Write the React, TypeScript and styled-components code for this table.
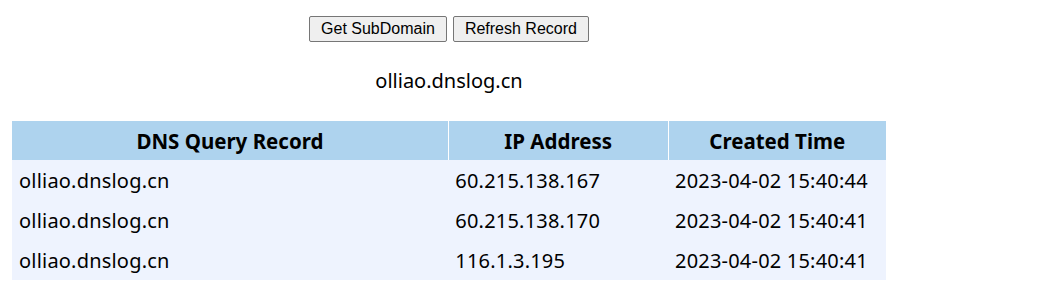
import React from "react";
import styled, { createGlobalStyle } from "styled-components";

const Global = createGlobalStyle`
  html, body { margin: 0; padding: 0; background: #fff; }
  body { font-family: "Noto Sans", "Open Sans", sans-serif; color: #000; }
`;

const Page = styled.div`
  width: 874px;
  margin-left: 12px;
  padding-top: 16px;
  display: flex;
  flex-direction: column;
  align-items: center;
`;

const Toolbar = styled.div`
  display: flex;
  gap: 6px;
`;

const Button = styled.button`
  font-family: "Liberation Sans", Arial, sans-serif;
  font-size: 16px;
  height: 26px;
  padding: 0 11px;
  background: #efefef;
  border: 1px solid #767676;
  border-radius: 2px;
  color: #000;
`;

const Domain = styled.div`
  margin-top: 24px;
  font-size: 20px;
  line-height: 30px;
  height: 30px;
`;

const Table = styled.table`
  margin-top: 25px;
  width: 874px;
  border-collapse: collapse;
  font-size: 20px;
`;

const HeadCell = styled.th<{ $w: number }>`
  width: ${(p) => p.$w}px;
  height: 39px;
  padding: 0;
  background: #aed3ee;
  font-weight: 700;
  font-size: 20.5px;
  text-align: center;
  border-left: 1px solid #fff;
  &:first-child { border-left: none; }
`;

const Row = styled.tr`
  background: #eef3fe;
`;

const Cell = styled.td`
  height: 40px;
  padding: 0 0 0 7px;
  text-align: left;
  letter-spacing: 0.2px;
`;

const rows = [
  ["olliao.dnslog.cn", "60.215.138.167", "2023-04-02 15:40:44"],
  ["olliao.dnslog.cn", "60.215.138.170", "2023-04-02 15:40:41"],
  ["olliao.dnslog.cn", "116.1.3.195", "2023-04-02 15:40:41"],
];

export default function App() {
  return (
    <>
      <Global />
      <Page>
        <Toolbar>
          <Button>Get SubDomain</Button>
          <Button>Refresh Record</Button>
        </Toolbar>
        <Domain>olliao.dnslog.cn</Domain>
        <Table>
          <thead>
            <tr>
              <HeadCell $w={437}>DNS Query Record</HeadCell>
              <HeadCell $w={219}>IP Address</HeadCell>
              <HeadCell $w={218}>Created Time</HeadCell>
            </tr>
          </thead>
          <tbody>
            {rows.map((r, i) => (
              <Row key={i}>
                {r.map((c, j) => (
                  <Cell key={j}>{c}</Cell>
                ))}
              </Row>
            ))}
          </tbody>
        </Table>
      </Page>
    </>
  );
}
